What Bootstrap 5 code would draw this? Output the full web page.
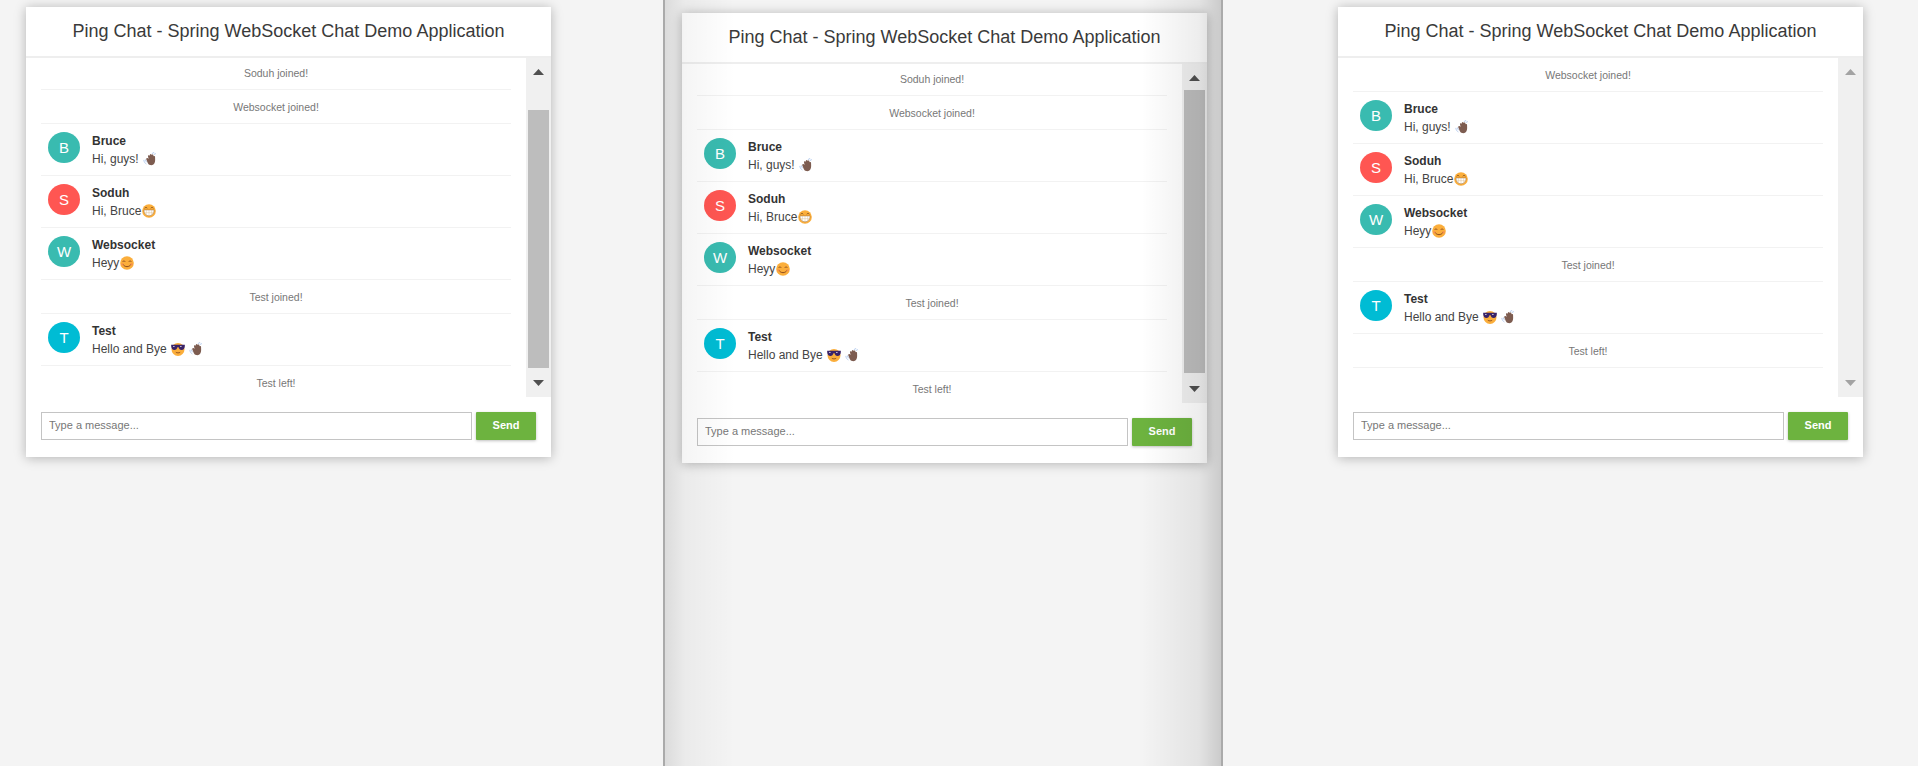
<!DOCTYPE html>
<html lang="en">
<head>
<meta charset="utf-8">
<title>Ping Chat</title>
<link href="https://cdn.jsdelivr.net/npm/bootstrap@5.3.0/dist/css/bootstrap.min.css" rel="stylesheet">
<style>
html,body{height:100%;overflow:hidden}
body{background:#f4f4f4;font-family:"Liberation Sans",Arial,sans-serif;color:#333;font-size:13px}
.stage{width:1918px;height:766px}
.win{height:766px;flex:none}
.win-a{width:663px;padding:7px 0 0 26px}
.win-b{width:560px;padding:13px 0 0 17px;border-left:2px solid #aaa;border-right:2px solid #aaa;position:relative}
.win-b::after{content:"";position:absolute;inset:0;pointer-events:none;background:linear-gradient(90deg,rgba(0,0,0,.1),rgba(0,0,0,.04) 20px,rgba(0,0,0,0) 70px),linear-gradient(270deg,rgba(0,0,0,.17),rgba(0,0,0,.07) 22px,rgba(0,0,0,0) 80px)}
.win-c{width:695px;padding:7px 0 0 115px}
.chat-box{width:525px;height:450px;background:#fff;box-shadow:0 1px 11px rgba(0,0,0,.27)}
.chat-head{height:51px;border-bottom:2px solid #eee;font-size:18px;line-height:49px;text-align:center;color:#3a3a3a;margin:0;font-weight:400}
.chat-body{height:339px}
.msg-clip{width:500px;padding:0 15px;overflow:hidden}
.msg-list{margin-top:-2px}
.msg-list.at-top{margin-top:0}
.evt-row{height:34px;border-bottom:1px solid #f2f2f2;line-height:34px;text-align:center;font-size:10.5px;color:#777;padding:0}
.usr-row{height:52px;border-bottom:1px solid #f2f2f2;padding:0 0 0 7px}
.ava{width:32px;height:31px;border-radius:50%;color:#fff;font-size:15px;line-height:31px;text-align:center;flex:none;margin-top:8px;margin-right:12px}
.bg-b{background:#39bbb0}
.bg-s{background:#ff5652}
.bg-t{background:#00bcd4}
.who{font-weight:700;font-size:12px;line-height:15px;margin-top:10px;color:#333}
.say{font-size:12px;line-height:17px;margin-top:2px;color:#444}
.emo{width:14px;height:14px;vertical-align:-3px;display:inline-block;margin-left:1px}
.sbar{width:25px;height:339px;background:#f0f0f0;flex:none}
.sbar-arrow{height:28px;flex:none}
.arw-dark{color:#505050}
.arw-dim{color:#a3a3a3}
.sbar-thumb{width:21px;background:#bdbdbd;margin-left:2px;flex:none}
.th-a{height:258px;margin-top:24px}
.th-b{height:283px;margin-top:-2px}
.compose{padding:15px 15px 0 15px;gap:4px}
.compose input{flex:1 1 auto;min-width:0;height:28px;border:1px solid #c4c4c4;border-radius:0;padding:0 7px 2px;font-size:11px;font-family:inherit;color:#333;outline:none}
.compose input::placeholder{color:#777}
.send-btn{width:60px;height:28px;background:#6db33f;border:0;border-radius:1px;color:#fff;font-weight:700;font-size:11px;padding:0 0 2px;box-shadow:0 1px 3px rgba(0,0,0,.25)}
</style>
</head>
<body>
<svg width="0" height="0" class="position-absolute">
<defs>
<symbol id="e-wave" viewBox="0 0 16 16">
<path d="M1 9.500c.2 1.900 1.100 3.200 2.500 4M2.800 9c.1 1 .5 1.800 1.200 2.400M10.500 1.700 12.400.6M12.800 2.700l1.500-.7" stroke="#b4cbee" stroke-width="1.100" fill="none" stroke-linecap="round"/>
<path d="M3.900 7.300c.9-.9 1.800-.2 2.500.8L5.700 4.800c-.2-1.200 1.300-1.600 1.700-.5L8 2.900c.3-1.100 1.800-.9 1.800.3l.3.100c.5-.9 1.900-.5 1.800.7l.1.900c.7-.6 1.900-.1 1.800 1 0 1.800.3 3.600-.2 5.400-.8 2.800-3.200 4.300-5.500 3.600C5.800 14.300 5 11.400 4.300 9.600c-.3-.8-.9-1.700-.4-2.300z" fill="#7d5c50"/>
</symbol>
<symbol id="e-grin" viewBox="0 0 16 16">
<circle cx="8" cy="8" r="7.800" fill="#fbae3b"/>
<path d="M3 4.800c.7-1.100 2.300-1.100 3 0M10 4.800c.7-1.100 2.300-1.100 3 0" stroke="#7a4a1e" stroke-width="1" fill="none"/>
<path d="M2.200 6.800h11.600c.2 3.900-2.500 6.700-5.800 6.700S2 10.700 2.200 6.800z" fill="#fff" stroke="#8a5a2a" stroke-width=".5"/>
<path d="M2.500 9.900h11M5 6.800v6M8 6.800v6.700M11 6.800v6" stroke="#d9b98c" stroke-width=".5"/>
</symbol>
<symbol id="e-smile" viewBox="0 0 16 16">
<circle cx="8" cy="8" r="7.800" fill="#fbae3b"/>
<path d="M3 6.600c.7-1.300 2.300-1.300 3 0M10 6.600c.7-1.300 2.300-1.300 3 0" stroke="#8a4a1e" stroke-width="1.100" fill="none"/>
<path d="M3.800 9.600c1 3.400 7.400 3.400 8.400 0" stroke="#8a4a1e" stroke-width="1.100" fill="none"/>
<circle cx="2.800" cy="9.500" r="1.300" fill="#f47f5a" opacity=".7"/><circle cx="13.200" cy="9.500" r="1.300" fill="#f47f5a" opacity=".7"/>
</symbol>
<symbol id="e-cool" viewBox="0 0 16 16">
<circle cx="8" cy="8.500" r="7.400" fill="#fbae3b"/>
<path d="M.2 3h15.600v1.800c-.2 2.800-1.400 4.200-3.700 4.200-2.100 0-3-1.100-3.400-3H7.300C6.900 7.900 6 9 3.900 9 1.600 9 .4 7.600.2 4.800z" fill="#3a2368"/>
<path d="M2.500 5.100h1.500M10.500 5.100H12" stroke="#fff" stroke-width="1"/>
<path d="M5.500 11.700c1.500 1 3.500 1 5 0" stroke="#8a4a1e" stroke-width="1" fill="none"/>
</symbol>
<symbol id="up-arw" viewBox="0 0 11 6"><path d="M5.500 0 11 6H0z" fill="currentColor"/></symbol>
<symbol id="dn-arw" viewBox="0 0 11 6"><path d="M0 0h11L5.500 6z" fill="currentColor"/></symbol>
</defs>
</svg>

<div class="stage d-flex">
  <section class="win win-a">
    <div class="chat-box">
      <h1 class="chat-head">Ping Chat - Spring WebSocket Chat Demo Application</h1>
      <div class="chat-body d-flex">
        <div class="msg-clip flex-grow-1"><div class="msg-list">
          <div class="evt-row">Soduh joined!</div>
          <div class="evt-row">Websocket joined!</div>
          <div class="usr-row d-flex"><div class="ava bg-b">B</div><div><div class="who">Bruce</div><div class="say">Hi, guys! <svg class="emo"><use href="#e-wave"/></svg></div></div></div>
          <div class="usr-row d-flex"><div class="ava bg-s">S</div><div><div class="who">Soduh</div><div class="say">Hi, Bruce<svg class="emo"><use href="#e-grin"/></svg></div></div></div>
          <div class="usr-row d-flex"><div class="ava bg-b">W</div><div><div class="who">Websocket</div><div class="say">Heyy<svg class="emo"><use href="#e-smile"/></svg></div></div></div>
          <div class="evt-row">Test joined!</div>
          <div class="usr-row d-flex"><div class="ava bg-t">T</div><div><div class="who">Test</div><div class="say">Hello and Bye <svg class="emo"><use href="#e-cool"/></svg> <svg class="emo"><use href="#e-wave"/></svg></div></div></div>
          <div class="evt-row">Test left!</div>
        </div></div>
        <div class="sbar d-flex flex-column">
          <div class="sbar-arrow d-flex justify-content-center align-items-center arw-dark"><svg width="11" height="6"><use href="#up-arw"/></svg></div>
          <div class="sbar-thumb th-a"></div>
          <div class="sbar-arrow mt-auto d-flex justify-content-center align-items-center arw-dark"><svg width="11" height="6"><use href="#dn-arw"/></svg></div>
        </div>
      </div>
      <form class="compose d-flex" onsubmit="return false"><input type="text" placeholder="Type a message..."><button class="send-btn" type="button">Send</button></form>
    </div>
  </section>

  <section class="win win-b">
    <div class="chat-box">
      <h1 class="chat-head">Ping Chat - Spring WebSocket Chat Demo Application</h1>
      <div class="chat-body d-flex">
        <div class="msg-clip flex-grow-1"><div class="msg-list">
          <div class="evt-row">Soduh joined!</div>
          <div class="evt-row">Websocket joined!</div>
          <div class="usr-row d-flex"><div class="ava bg-b">B</div><div><div class="who">Bruce</div><div class="say">Hi, guys! <svg class="emo"><use href="#e-wave"/></svg></div></div></div>
          <div class="usr-row d-flex"><div class="ava bg-s">S</div><div><div class="who">Soduh</div><div class="say">Hi, Bruce<svg class="emo"><use href="#e-grin"/></svg></div></div></div>
          <div class="usr-row d-flex"><div class="ava bg-b">W</div><div><div class="who">Websocket</div><div class="say">Heyy<svg class="emo"><use href="#e-smile"/></svg></div></div></div>
          <div class="evt-row">Test joined!</div>
          <div class="usr-row d-flex"><div class="ava bg-t">T</div><div><div class="who">Test</div><div class="say">Hello and Bye <svg class="emo"><use href="#e-cool"/></svg> <svg class="emo"><use href="#e-wave"/></svg></div></div></div>
          <div class="evt-row">Test left!</div>
        </div></div>
        <div class="sbar d-flex flex-column">
          <div class="sbar-arrow d-flex justify-content-center align-items-center arw-dark"><svg width="11" height="6"><use href="#up-arw"/></svg></div>
          <div class="sbar-thumb th-b"></div>
          <div class="sbar-arrow mt-auto d-flex justify-content-center align-items-center arw-dark"><svg width="11" height="6"><use href="#dn-arw"/></svg></div>
        </div>
      </div>
      <form class="compose d-flex" onsubmit="return false"><input type="text" placeholder="Type a message..."><button class="send-btn" type="button">Send</button></form>
    </div>
  </section>

  <section class="win win-c">
    <div class="chat-box">
      <h1 class="chat-head">Ping Chat - Spring WebSocket Chat Demo Application</h1>
      <div class="chat-body d-flex">
        <div class="msg-clip flex-grow-1"><div class="msg-list at-top">
          <div class="evt-row">Websocket joined!</div>
          <div class="usr-row d-flex"><div class="ava bg-b">B</div><div><div class="who">Bruce</div><div class="say">Hi, guys! <svg class="emo"><use href="#e-wave"/></svg></div></div></div>
          <div class="usr-row d-flex"><div class="ava bg-s">S</div><div><div class="who">Soduh</div><div class="say">Hi, Bruce<svg class="emo"><use href="#e-grin"/></svg></div></div></div>
          <div class="usr-row d-flex"><div class="ava bg-b">W</div><div><div class="who">Websocket</div><div class="say">Heyy<svg class="emo"><use href="#e-smile"/></svg></div></div></div>
          <div class="evt-row">Test joined!</div>
          <div class="usr-row d-flex"><div class="ava bg-t">T</div><div><div class="who">Test</div><div class="say">Hello and Bye <svg class="emo"><use href="#e-cool"/></svg> <svg class="emo"><use href="#e-wave"/></svg></div></div></div>
          <div class="evt-row">Test left!</div>
        </div></div>
        <div class="sbar d-flex flex-column justify-content-between">
          <div class="sbar-arrow d-flex justify-content-center align-items-center arw-dim"><svg width="11" height="6"><use href="#up-arw"/></svg></div>
          <div class="sbar-arrow d-flex justify-content-center align-items-center arw-dim"><svg width="11" height="6"><use href="#dn-arw"/></svg></div>
        </div>
      </div>
      <form class="compose d-flex" onsubmit="return false"><input type="text" placeholder="Type a message..."><button class="send-btn" type="button">Send</button></form>
    </div>
  </section>
</div>
<script src="https://cdn.jsdelivr.net/npm/bootstrap@5.3.0/dist/js/bootstrap.bundle.min.js"></script>
</body>
</html>
